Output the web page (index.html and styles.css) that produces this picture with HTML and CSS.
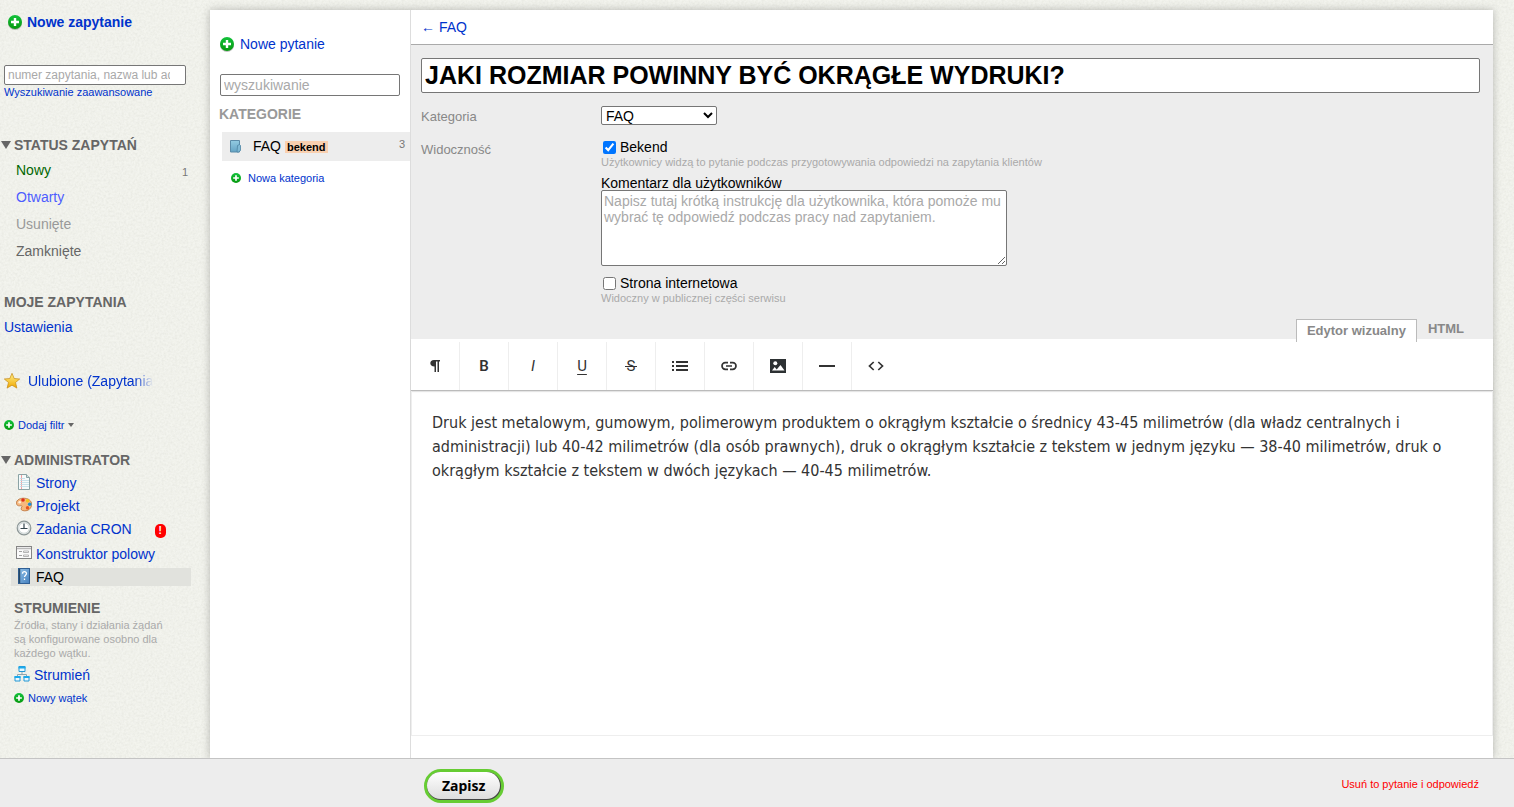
FILE: index.html
```html
<!DOCTYPE html>
<html lang="pl">
<head>
<meta charset="utf-8">
<title>FAQ</title>
<link rel="stylesheet" href="styles.css">
</head>
<body>
<svg class="defs" aria-hidden="true">
  <defs>
    <linearGradient id="g-green" x1="0" y1="0" x2="0" y2="1"><stop offset="0" stop-color="#13c23c"/><stop offset="1" stop-color="#07990f"/></linearGradient>
    <linearGradient id="g-gold" x1="0" y1="0" x2="0" y2="1"><stop offset="0" stop-color="#fff08a"/><stop offset="1" stop-color="#f0a800"/></linearGradient>
    <linearGradient id="g-blue" x1="0" y1="0" x2="1" y2="1"><stop offset="0" stop-color="#8fc0e8"/><stop offset="1" stop-color="#4580be"/></linearGradient>
    <linearGradient id="g-folder" x1="0" y1="0" x2="0" y2="1"><stop offset="0" stop-color="#93cbe2"/><stop offset="1" stop-color="#65a4c4"/></linearGradient>
    <symbol id="plus" viewBox="0 0 14 14"><circle cx="7" cy="7" r="7" fill="url(#g-green)"/><path d="M7 3v8M3 7h8" stroke="#fff" stroke-width="2.4"/></symbol>
  </defs>
</svg>
<div class="app">
  <div class="workspace">
    <aside class="sidebar">
      <a class="new-request" href="#"><svg class="icon-plus" aria-hidden="true"><use href="#plus"/></svg>Nowe zapytanie</a>
      <input class="field search-requests" type="text" aria-label="Szukaj zapytania" placeholder="numer zapytania, nazwa lub adres">
      <a class="small-link" href="#">Wyszukiwanie zaawansowane</a>

      <h2 class="heading heading-status"><span class="triangle"></span>STATUS ZAPYTAŃ</h2>
      <ul class="statuses">
        <li><a class="status-new" href="#">Nowy</a><span class="count">1</span></li>
        <li><a class="status-open" href="#">Otwarty</a></li>
        <li><a class="status-deleted" href="#">Usunięte</a></li>
        <li><a class="status-closed" href="#">Zamknięte</a></li>
      </ul>

      <h2 class="heading heading-mine">MOJE ZAPYTANIA</h2>
      <a class="settings" href="#">Ustawienia</a>
      <a class="favourites" href="#">
        <svg width="16" height="16" viewBox="0 0 16 16" aria-hidden="true"><path d="M8 .3l2.200 5.200 5.500.5-4.200 3.500 1.400 5.600L8 12.200l-4.900 2.900 1.400-5.600L.3 6l5.500-.5z" fill="url(#g-gold)" stroke="#c68a15" stroke-width=".7"/></svg>
        <span class="fade">Ulubione (Zapytania</span>
      </a>
      <a class="small-link add-filter" href="#"><svg class="icon-plus-small" aria-hidden="true"><use href="#plus"/></svg>Dodaj filtr<span class="caret"></span></a>

      <h2 class="heading heading-admin"><span class="triangle"></span>ADMINISTRATOR</h2>
      <ul class="admin">
        <li><a href="#">
          <svg width="16" height="16" viewBox="0 0 16 16" aria-hidden="true"><path d="M2.500.5h8l3 3v12h-11z" fill="#f5fbfb" stroke="#8ba3a5"/><path d="M10.500.5v3h3" fill="#cfdede" stroke="#8ba3a5"/><path d="M5.500 1v14" stroke="#f2a0a0"/><path d="M4 4.500h5M4 6.500h9M4 8.500h9M4 10.500h9M4 12.500h9" stroke="#bddbe6" stroke-width=".8"/></svg>Strony</a></li>
        <li><a href="#">
          <svg width="16" height="16" viewBox="0 0 16 16" aria-hidden="true"><path d="M1 4C3 1 8 .5 12 2c4 2 4.500 6 2.500 9-1.500 2.500-5 3.500-8 2.500-2-.7-1.500-2.500-.7-3.500.7-1-.3-1.700-1.500-1.300C1.500 9.500-.8 7 1 4z" fill="#f6b87e" stroke="#b9713a" stroke-width=".8"/><circle cx="7" cy="3" r="1.800" fill="#df2f18"/><circle cx="11.500" cy="3.700" r="1.700" fill="#f0c51b"/><circle cx="13.700" cy="7.300" r="1.800" fill="#1c8fd2"/><circle cx="11.500" cy="10.800" r="1.700" fill="#e65420"/><circle cx="3.700" cy="5.200" r="1.300" fill="#fff1dd"/></svg>Projekt</a></li>
        <li><a href="#">
          <svg width="16" height="16" viewBox="0 0 16 16" aria-hidden="true"><circle cx="8" cy="8" r="6.800" fill="#e3e8e8" stroke="#8c9696" stroke-width="1.200"/><circle cx="8" cy="8" r="5.200" fill="#fff" stroke="#c9d2d2" stroke-width=".8"/><path d="M8 3.500v5H4.500M8 8.500h3.500" fill="none" stroke="#36474f" stroke-width="1.200"/></svg>Zadania CRON</a><span class="alert">!</span></li>
        <li><a href="#">
          <svg width="16" height="16" viewBox="0 0 16 16" aria-hidden="true"><rect x=".5" y="1.500" width="15" height="12" fill="#fafafa" stroke="#858585"/><path d="M1 3.500h14" stroke="#b9b9b9" stroke-width="1.500"/><path d="M3 6.500h3M3 10.500h3" stroke="#a2a2a2"/><path d="M7.500 6h5v1.500h-5zM7.500 10h5v1.500h-5z" fill="#fff" stroke="#a2a2a2" stroke-width=".8"/></svg>Konstruktor polowy</a></li>
        <li class="current"><a href="#">
          <svg width="16" height="16" viewBox="0 0 16 16" aria-hidden="true"><rect x="2.500" y=".5" width="11" height="15" fill="url(#g-blue)" stroke="#2f5f94"/><path d="M3.500 1v14" stroke="#264868" stroke-width="1.500"/><path d="M6.500 5.700c0-2.600 4-2.600 4-.2 0 1.700-2 1.600-2 3.500M8.500 10.500v1.500" fill="none" stroke="#fff" stroke-width="1.300"/></svg>FAQ</a></li>
      </ul>

      <section class="threads">
        <h2 class="heading">STRUMIENIE</h2>
        <p>Źródła, stany i działania żądań są konfigurowane osobno dla każdego wątku.</p>
        <a class="thread" href="#">
          <svg width="16" height="16" viewBox="0 0 16 16" aria-hidden="true"><path d="M8 6v3M3.500 11V8.500h9V11" fill="none" stroke="#8fa5ae"/><path d="M5 .5h6v5H5zM1 10.500h5v4.500H1zM10 10.500h5V15h-5z" fill="#e8f8ff" stroke="#2498d4"/><path d="M4.500 1.500h7M.5 11h6M9.500 11h6" stroke="#1ba9ec" stroke-width="2"/></svg>Strumień</a>
        <a class="small-link new-thread" href="#"><svg class="icon-plus-small" aria-hidden="true"><use href="#plus"/></svg>Nowy wątek</a>
      </section>
    </aside>

    <div class="panel">
      <nav class="categories">
        <a class="new-question" href="#"><svg class="icon-plus" aria-hidden="true"><use href="#plus"/></svg>Nowe pytanie</a>
        <input class="field search-questions" type="text" aria-label="Wyszukiwanie" placeholder="wyszukiwanie">
        <h2 class="heading heading-light">KATEGORIE</h2>
        <a class="category" href="#">
          <svg width="12" height="14" viewBox="0 0 12 14" aria-hidden="true"><path d="M1.500.5h9v11.500h-9z" fill="url(#g-folder)" stroke="#5b8ba8"/><path d="M8.500 5.500l2-1 1 1v5L9.500 12H8z" fill="#7fb9d5" stroke="#4d84a3" stroke-width=".8"/></svg>
          <span class="category-name">FAQ</span><span class="tag">bekend</span><span class="count">3</span>
        </a>
        <a class="small-link new-category" href="#"><svg class="icon-plus-small" aria-hidden="true"><use href="#plus"/></svg>Nowa kategoria</a>
      </nav>

      <main class="content">
        <div class="crumbs"><a href="#">← FAQ</a></div>
        <form class="question" id="question">
          <input class="field title" type="text" aria-label="Pytanie" value="JAKI ROZMIAR POWINNY BYĆ OKRĄGŁE WYDRUKI?">
          <div class="row">
            <label class="row-label" for="category">Kategoria</label>
            <select class="category-select" id="category"><option>FAQ</option></select>
          </div>
          <div class="row">
            <span class="row-label">Widoczność</span>
            <div class="options">
              <label class="check"><input type="checkbox" checked>Bekend</label>
              <p class="hint">Użytkownicy widzą to pytanie podczas przygotowywania odpowiedzi na zapytania klientów</p>
              <label class="comment-label" for="comment">Komentarz dla użytkowników</label>
              <textarea class="field comment" id="comment" placeholder="Napisz tutaj krótką instrukcję dla użytkownika, która pomoże mu wybrać tę odpowiedź podczas pracy nad zapytaniem."></textarea>
              <label class="check"><input type="checkbox">Strona internetowa</label>
              <p class="hint">Widoczny w publicznej części serwisu</p>
            </div>
          </div>
          <div class="tabs">
            <button class="tab tab-active" type="button">Edytor wizualny</button>
            <button class="tab" type="button">HTML</button>
          </div>
        </form>
        <div class="toolbar">
          <button class="tool" type="button" aria-label="Akapit"><svg width="16" height="16" viewBox="0 0 16 16"><path d="M13 2v1.500h-1V14h-1.500V3.500H9V14H7.500V8.500C2 8.500 2 2 7 2z" fill="#333"/></svg></button>
          <button class="tool tool-bold" type="button">B</button>
          <button class="tool tool-italic" type="button">I</button>
          <button class="tool tool-underline" type="button">U</button>
          <button class="tool tool-strike" type="button" aria-label="Przekreślenie"><span>S</span></button>
          <button class="tool" type="button" aria-label="Lista"><svg width="16" height="16" viewBox="0 0 16 16"><path d="M0 4h2M4 4h12M0 8h2M4 8h12M0 12h2M4 12h12" stroke="#333" stroke-width="2"/></svg></button>
          <button class="tool" type="button" aria-label="Odnośnik"><svg width="16" height="16" viewBox="0 0 16 16"><path d="M7 4.700H4.300a3.300 3.300 0 0 0 0 6.600H7M9 4.700h2.700a3.300 3.300 0 0 1 0 6.600H9M5 8h6" fill="none" stroke="#333" stroke-width="1.700"/></svg></button>
          <button class="tool" type="button" aria-label="Obraz"><svg width="16" height="16" viewBox="0 0 16 16"><path d="M0 1h16v14H0z" fill="#2d3133"/><circle cx="5.300" cy="5.300" r="2" fill="#fff"/><path d="M2 12.500l2.700-3.500 2 2.500 3.800-4.500 4 5.500z" fill="#fff"/></svg></button>
          <button class="tool" type="button" aria-label="Linia"><svg width="16" height="16" viewBox="0 0 16 16"><path d="M0 8h16" stroke="#333" stroke-width="2"/></svg></button>
          <button class="tool tool-last" type="button" aria-label="Kod"><svg width="16" height="16" viewBox="0 0 16 16"><path d="M5.700 4L1.500 8l4.200 4M10.300 4l4.200 4-4.200 4" fill="none" stroke="#333" stroke-width="1.700"/></svg></button>
        </div>
        <div class="editor" contenteditable="true" role="textbox" aria-label="Odpowiedź">
          <p>Druk jest metalowym, gumowym, polimerowym produktem o okrągłym kształcie o średnicy 43-45 milimetrów (dla władz centralnych i administracji) lub 40-42 milimetrów (dla osób prawnych), druk o okrągłym kształcie z tekstem w jednym języku — 38-40 milimetrów, druk o okrągłym kształcie z tekstem w dwóch językach — 40-45 milimetrów.</p>
        </div>
      </main>
    </div>
  </div>
  <footer class="actions">
    <button class="save" type="submit" form="question"><span>Zapisz</span></button>
    <a class="delete" href="#">Usuń to pytanie i odpowiedź</a>
  </footer>
</div>
</body>
</html>
```
FILE: styles.css
```css
* { box-sizing: border-box; }

body {
  margin: 0;
  font: 14px/20px "Liberation Sans", Arial, sans-serif;
  color: #000;
  background-color: #f3f4ee;
  background-image: url("data:image/svg+xml,%3Csvg xmlns='http://www.w3.org/2000/svg' width='120' height='120'%3E%3Cfilter id='n'%3E%3CfeTurbulence type='fractalNoise' baseFrequency='.45' numOctaves='2' stitchTiles='stitch'/%3E%3CfeColorMatrix values='0 0 0 0 .4 0 0 0 0 .4 0 0 0 0 .35 .25 0 0 0 -.08'/%3E%3C/filter%3E%3Crect width='120' height='120' filter='url(%23n)'/%3E%3C/svg%3E");
}

a { color: #0033cc; text-decoration: none; }
h2, p, ul { margin: 0; padding: 0; }
ul { list-style: none; }
svg { flex: none; }
button, input, select, textarea { font-family: inherit; }

.defs { position: absolute; width: 0; height: 0; }

.app { display: flex; flex-direction: column; min-height: 100vh; }
.workspace { display: flex; flex: 1; padding: 10px 21px 0 0; overflow: hidden; }

.field {
  display: block;
  width: 100%;
  margin: 0;
  border: 1px solid #767676;
  border-radius: 2px;
  background: #fff;
}
.field::placeholder { color: #a9a9a9; opacity: 1; }

.icon-plus { width: 14px; height: 14px; filter: drop-shadow(0 1px 0 rgba(0, 0, 0, .25)); }
.icon-plus-small { width: 10px; height: 10px; }
.small-link { display: flex; align-items: center; font-size: 11px; line-height: 14px; }
.count { font-size: 11px; color: #777; }

.heading { display: flex; align-items: center; font-size: 14px; line-height: 20px; color: #666; }
.triangle {
  margin-right: 3px;
  border: 5px solid transparent;
  border-top: 8px solid #666;
  border-bottom: 0;
}

/* Sidebar */
.sidebar { flex: none; width: 210px; padding: 2px 19px 20px 4px; }
.new-request { display: flex; align-items: center; gap: 5px; margin-left: 4px; font-weight: bold; }
.search-requests { width: 182px; height: 20px; margin-top: 33px; padding: 0 15px 0 3px; font-size: 12px; }
.heading-status { margin: 36px 0 2px -3px; }
.statuses li { display: flex; justify-content: space-between; padding: 0 3px 0 12px; line-height: 27px; }
.statuses .count { line-height: 30px; height: 27px; }
.status-new { color: #006600; }
.status-open { color: #4d5dff; }
.status-deleted { color: #999; }
.status-closed { color: #666; }
.heading-mine { margin: 27px 0 5px; }
.settings { display: block; }
.favourites { display: flex; align-items: center; gap: 8px; margin-top: 34px; }
.fade {
  white-space: nowrap;
  -webkit-mask-image: linear-gradient(to right, #000 85%, transparent);
  mask-image: linear-gradient(to right, #000 85%, transparent);
}
.add-filter { gap: 4px; margin-top: 27px; }
.caret { border: 3px solid transparent; border-top: 4px solid #666; border-bottom: 0; }
.heading-admin { margin: 18px 0 4px -3px; }
.admin { display: flex; flex-direction: column; gap: 5px; margin: 0 0 12px 7px; }
.admin li { display: flex; width: 180px; padding-left: 5px; line-height: 18px; }
.admin a { display: flex; align-items: flex-start; gap: 4px; height: 18px; }
.admin .current { background: #e1e2dd; }
.admin .current a { color: #000; }
.alert {
  width: 11px;
  margin: 4px 0 2px 23px;
  border-radius: 5px;
  background: #f00;
  color: #fff;
  font-size: 10px;
  font-weight: bold;
  line-height: 14px;
  text-align: center;
}
.threads { margin-left: 10px; }
.threads p { width: 160px; font-size: 11px; line-height: 14px; color: #aaa; }
.thread { display: flex; gap: 4px; margin-top: 6px; line-height: 18px; }
.new-thread { gap: 4px; margin-top: 7px; }

/* Panel */
.panel {
  display: flex;
  flex: 1;
  min-width: 0;
  background: #fff;
  box-shadow: 0 0 8px rgba(0, 0, 0, .25);
}
.categories { flex: none; width: 201px; padding: 24px 0 0 10px; border-right: 1px solid #ddd; }
.new-question { display: flex; align-items: center; gap: 6px; }
.search-questions { width: 180px; height: 22px; margin-top: 20px; padding: 0 3px; font-size: 14px; }
.heading-light { margin: 8px 0 8px -1px; color: #999; }
.category { display: flex; align-items: center; margin-left: 2px; padding: 0 5px 0 7px; background: #ededed; color: #000; line-height: 29px; }
.category-name { margin-left: 12px; }
.tag { margin-left: 4px; padding: 0 2px; background: #f9d0b0; font-size: 11px; font-weight: bold; line-height: 12px; }
.category .count { margin-left: auto; line-height: 25px; align-self: flex-start; }
.new-category { gap: 7px; margin: 10px 0 0 11px; }

/* Question form */
.content { display: flex; flex: 1; flex-direction: column; min-width: 0; }
.crumbs { padding: 7px 10px; border-bottom: 1px solid #aaa; }
.question { padding: 13px 13px 0 10px; background: #ededed; }
.title { height: 35px; margin-bottom: 13px; padding: 0 3px; font-size: 25px; font-weight: bold; }
.row { display: flex; align-items: flex-start; margin-bottom: 11px; }
.row-label { flex: none; width: 180px; font-size: 13px; line-height: 22px; color: #888; }
.category-select { width: 116px; height: 19px; padding: 0; border: 1px solid #767676; border-radius: 2px; background: #fff; font-size: 14px; }
.options { flex: 1; min-width: 0; }
.check { display: flex; align-items: center; gap: 4px; width: fit-content; line-height: 16px; }
.check input { width: 13px; height: 13px; margin: 0 0 0 2px; }
.hint { font-size: 11px; line-height: 14px; color: #aaa; }
.comment-label { display: block; margin-top: 7px; line-height: 14px; }
.comment { width: 406px; height: 76px; margin-bottom: 9px; padding: 2px; font-size: 14px; line-height: 16px; }
.tabs { display: flex; justify-content: flex-end; height: 23px; padding-top: 3px; }
.tab { height: 20px; padding: 0 16px 0 11px; border: 0; background: none; color: #888; font-size: 13px; font-weight: bold; line-height: 18px; }
.tab-active { height: 23px; padding: 0 10px; border: 1px solid #bbb; border-bottom: 0; background: #fff; line-height: 20px; }

/* Editor */
.toolbar { display: flex; padding-top: 3px; border-bottom: 1px solid #bbb; box-shadow: 0 1px 1px rgba(0, 0, 0, .1); }
.tool {
  display: flex;
  align-items: center;
  justify-content: center;
  width: 49px;
  height: 48px;
  padding: 0;
  border: 0;
  border-right: 1px solid #eee;
  background: none;
  color: #333;
  font-family: Roboto, sans-serif;
  font-size: 15px;
}
.tool-last { border-right-color: transparent; }
.tool-bold { font-weight: 600; }
.tool-italic { font-style: italic; }
.tool-underline { text-decoration: underline; text-underline-offset: 3px; }
.tool-strike span { padding: 0 2px; background: linear-gradient(#333, #333) center / 100% 1px no-repeat; }
.editor {
  flex: 1;
  margin-bottom: 22px;
  padding: 20px;
  border: 1px solid #eee;
  border-top: 0;
  color: #333;
  font-family: "Trebuchet MS", "DejaVu Sans Condensed", sans-serif;
  font-size: 16px;
  line-height: 24px;
}

/* Footer */
.actions {
  display: flex;
  align-items: flex-start;
  justify-content: space-between;
  height: 49px;
  padding: 10px 35px 0 424px;
  border-top: 1px solid #c4c4c4;
  background: #ededed;
}
.save {
  padding: 0;
  border: 3px solid #66cc33;
  border-radius: 17px;
  background: #444;
  font-family: "Noto Sans", sans-serif;
  font-size: 14px;
  font-weight: bold;
}
.save span {
  display: block;
  margin: 0 1px 1px 0;
  padding: 0 15px;
  border-radius: 14px;
  background: linear-gradient(#fff, #ddd);
  line-height: 27px;
}
.delete { color: #f00; font-size: 11px; line-height: 30px; }
```
